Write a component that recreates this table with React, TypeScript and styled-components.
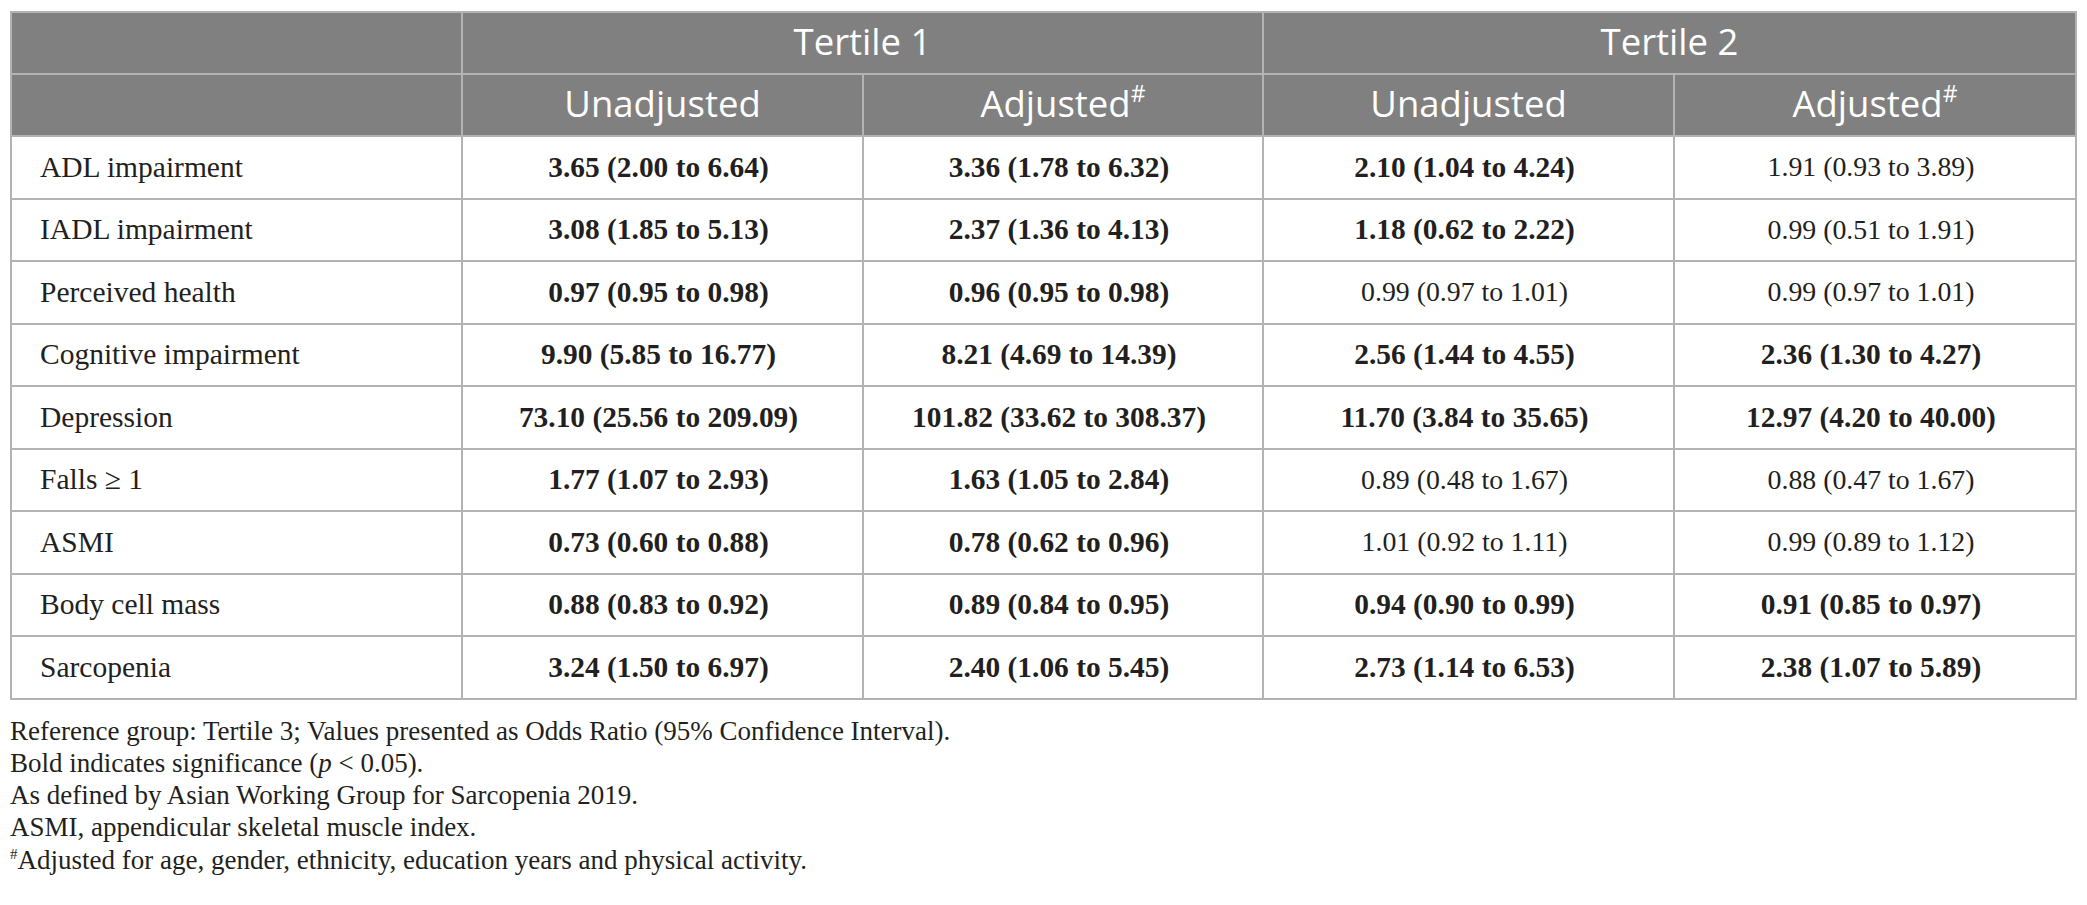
import styled, { createGlobalStyle } from "styled-components";

const GlobalStyle = createGlobalStyle`
  body {
    margin: 0;
    background: #ffffff;
  }
`;

const Page = styled.div`
  padding: 11px 12px 0 10px;
  font-family: "Liberation Serif", "Times New Roman", serif;
  color: #231f20;
`;

const Table = styled.table`
  width: 2065px;
  border-collapse: collapse;
  table-layout: fixed;
  border: 2px solid #b3b3b3;
`;

const HeadCell = styled.th`
  background: #808080;
  color: #ffffff;
  font-family: "Open Sans", "Noto Sans", sans-serif;
  font-weight: 400;
  font-size: 36.5px;
  height: 62px;
  padding: 0 0 5px;
  box-sizing: border-box;
  text-align: center;
  border: 2px solid #b3b3b3;
  sup {
    font-size: 23px;
    vertical-align: 15px;
    line-height: 0;
  }
`;

const LabelCell = styled.td`
  font-size: 29.5px;
  height: 60.5px;
  padding: 0 0 0 28px;
  text-align: left;
  border: 2px solid #b3b3b3;
`;

const ValueCell = styled.td<{ $bold?: boolean }>`
  font-size: ${(p) => (p.$bold ? "29.4px" : "27.8px")};
  font-weight: ${(p) => (p.$bold ? 700 : 400)};
  height: 60.5px;
  padding: 0 8px 0 0;
  text-align: center;
  border: 2px solid #b3b3b3;
`;

const Notes = styled.div`
  margin-top: 15px;
  font-size: 27px;
  line-height: 32.3px;
  sup {
    font-size: 15px;
    vertical-align: 10px;
    line-height: 0;
  }
  i {
    font-style: italic;
  }
`;

type Row = {
  label: string;
  values: [string, boolean][];
};

const rows: Row[] = [
  {
    label: "ADL impairment",
    values: [
      ["3.65 (2.00 to 6.64)", true],
      ["3.36 (1.78 to 6.32)", true],
      ["2.10 (1.04 to 4.24)", true],
      ["1.91 (0.93 to 3.89)", false],
    ],
  },
  {
    label: "IADL impairment",
    values: [
      ["3.08 (1.85 to 5.13)", true],
      ["2.37 (1.36 to 4.13)", true],
      ["1.18 (0.62 to 2.22)", true],
      ["0.99 (0.51 to 1.91)", false],
    ],
  },
  {
    label: "Perceived health",
    values: [
      ["0.97 (0.95 to 0.98)", true],
      ["0.96 (0.95 to 0.98)", true],
      ["0.99 (0.97 to 1.01)", false],
      ["0.99 (0.97 to 1.01)", false],
    ],
  },
  {
    label: "Cognitive impairment",
    values: [
      ["9.90 (5.85 to 16.77)", true],
      ["8.21 (4.69 to 14.39)", true],
      ["2.56 (1.44 to 4.55)", true],
      ["2.36 (1.30 to 4.27)", true],
    ],
  },
  {
    label: "Depression",
    values: [
      ["73.10 (25.56 to 209.09)", true],
      ["101.82 (33.62 to 308.37)", true],
      ["11.70 (3.84 to 35.65)", true],
      ["12.97 (4.20 to 40.00)", true],
    ],
  },
  {
    label: "Falls \u2265 1",
    values: [
      ["1.77 (1.07 to 2.93)", true],
      ["1.63 (1.05 to 2.84)", true],
      ["0.89 (0.48 to 1.67)", false],
      ["0.88 (0.47 to 1.67)", false],
    ],
  },
  {
    label: "ASMI",
    values: [
      ["0.73 (0.60 to 0.88)", true],
      ["0.78 (0.62 to 0.96)", true],
      ["1.01 (0.92 to 1.11)", false],
      ["0.99 (0.89 to 1.12)", false],
    ],
  },
  {
    label: "Body cell mass",
    values: [
      ["0.88 (0.83 to 0.92)", true],
      ["0.89 (0.84 to 0.95)", true],
      ["0.94 (0.90 to 0.99)", true],
      ["0.91 (0.85 to 0.97)", true],
    ],
  },
  {
    label: "Sarcopenia",
    values: [
      ["3.24 (1.50 to 6.97)", true],
      ["2.40 (1.06 to 5.45)", true],
      ["2.73 (1.14 to 6.53)", true],
      ["2.38 (1.07 to 5.89)", true],
    ],
  },
];

export default function App() {
  return (
    <Page>
      <GlobalStyle />
      <Table>
        <colgroup>
          <col style={{ width: 451 }} />
          <col style={{ width: 401 }} />
          <col style={{ width: 400 }} />
          <col style={{ width: 411 }} />
          <col style={{ width: 402 }} />
        </colgroup>
        <thead>
          <tr>
            <HeadCell />
            <HeadCell colSpan={2}>Tertile 1</HeadCell>
            <HeadCell colSpan={2}>Tertile 2</HeadCell>
          </tr>
          <tr>
            <HeadCell />
            <HeadCell>Unadjusted</HeadCell>
            <HeadCell>
              Adjusted<sup>#</sup>
            </HeadCell>
            <HeadCell>Unadjusted</HeadCell>
            <HeadCell>
              Adjusted<sup>#</sup>
            </HeadCell>
          </tr>
        </thead>
        <tbody>
          {rows.map((row) => (
            <tr key={row.label}>
              <LabelCell>{row.label}</LabelCell>
              {row.values.map(([text, bold], i) => (
                <ValueCell key={i} $bold={bold}>
                  {text}
                </ValueCell>
              ))}
            </tr>
          ))}
        </tbody>
      </Table>
      <Notes>
        <div>Reference group: Tertile 3; Values presented as Odds Ratio (95% Confidence Interval).</div>
        <div>
          Bold indicates significance (<i>p</i> &lt; 0.05).
        </div>
        <div>As defined by Asian Working Group for Sarcopenia 2019.</div>
        <div>ASMI, appendicular skeletal muscle index.</div>
        <div>
          <sup>#</sup>Adjusted for age, gender, ethnicity, education years and physical activity.
        </div>
      </Notes>
    </Page>
  );
}
